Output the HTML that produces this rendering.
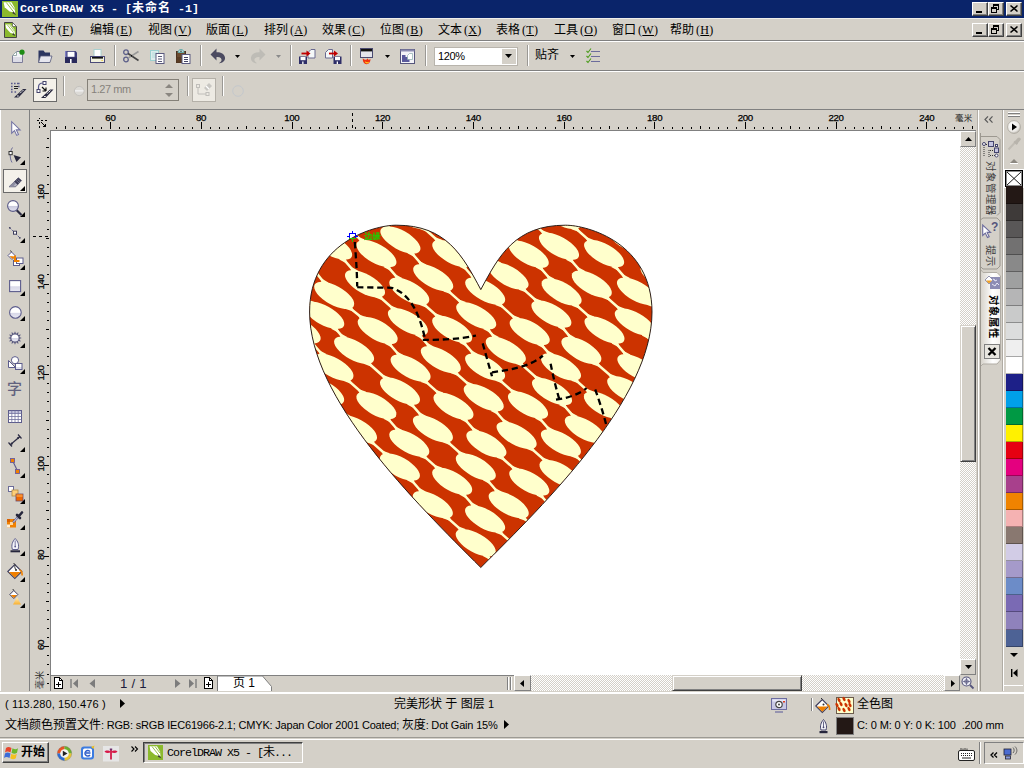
<!DOCTYPE html><html><head><meta charset="utf-8"><title>CorelDRAW X5</title><style>

html,body{margin:0;padding:0;}
body{width:1024px;height:768px;overflow:hidden;background:#D4D0C8;position:relative;font-family:"Liberation Sans","Noto Sans CJK SC",sans-serif;font-size:11px;color:#000;}
.a{position:absolute;}
.t{position:absolute;white-space:nowrap;line-height:1;}
svg{position:absolute;overflow:visible;}
.btn{position:absolute;background:#D4D0C8;box-sizing:border-box;border:1px solid;border-color:#fff #404040 #404040 #fff;box-shadow:inset -1px -1px 0 #808080, inset 1px 1px 0 #D4D0C8;}
.sep{position:absolute;width:2px;border-left:1px solid #9A9894;border-right:1px solid #fff;box-sizing:border-box;}
.hl{position:absolute;left:0;width:1024px;height:1px;}
.menu{font-family:"Liberation Serif","Noto Sans CJK SC",serif;font-size:12px;}
.menu i{font-style:normal;letter-spacing:0.3px;margin-left:2px;}
.menu u{text-decoration:underline;}

</style></head><body>
<div class="a" style="left:0;top:0;width:1024px;height:18px;background:#0A246A"></div><div class="hl" style="top:18px;background:#F0EFEB"></div><svg style="left:2px;top:1px" width="16" height="16" viewBox="0 0 16 16"><rect width="16" height="16" fill="#8BB92D"/><path d="M1.5 1.2L9.5 1.200L12.600 6.800L13.200 11.800L7.600 10.600L2.700 6.200Z" fill="#fff"/><path d="M4.300 1.500L11.300 10.500M7.300 1.500L12.600 8.500" stroke="#8BB92D" stroke-width="0.900"/><path d="M11.300 10.300L14.300 14.300L10.300 12.300Z" fill="#3A3A3A"/></svg><div class="t" style="left:20px;top:3px;color:#fff;font-weight:bold;font-family:'Liberation Mono','Noto Sans CJK SC',monospace;font-size:11.67px;">CorelDRAW X5 - [<span style="font-size:12px;letter-spacing:1px">未命名</span> -1]</div><div class="btn" style="left:972px;top:2px;width:16px;height:14px"></div><div class="a" style="left:976px;top:11px;width:6px;height:2px;background:#000"></div><div class="btn" style="left:988px;top:2px;width:16px;height:14px"></div><svg style="left:988px;top:2px" width="16" height="14" shape-rendering="crispEdges"><rect x="5.5" y="2.500" width="5" height="5" fill="none" stroke="#000"/><rect x="5" y="2" width="6" height="2" fill="#000"/><rect x="3.500" y="5.500" width="5" height="5" fill="#D4D0C8" stroke="#000"/><rect x="3" y="5" width="6" height="2" fill="#000"/></svg><div class="btn" style="left:1006px;top:2px;width:16px;height:14px"></div><svg style="left:1006px;top:2px" width="16" height="14"><path d="M4.5 3.5l7 6M11.5 3.5l-7 6" fill="none" stroke="#000" stroke-width="1.6"/></svg>
<div class="hl" style="top:40px;background:#808080"></div><div class="hl" style="top:41px;background:#fff"></div><svg style="left:4px;top:22px" width="13" height="16" viewBox="0 0 13 16"><path d="M0.5 0.5h8l4 4v11h-12z" fill="#8BB92D" stroke="#444"/><path d="M8.5 0.5v4h4z" fill="#fff" stroke="#444" stroke-width="0.6"/><path d="M1.500 2.500l5 0l3.800 5l0.700 4.500l-4.500-1l-4.500-5z" fill="#fff"/><path d="M3.500 3l6 7.500M5.800 3l4.500 6" stroke="#8BB92D" stroke-width="0.800"/><path d="M9.300 11l2.200 3l-3.300-1.300z" fill="#3A3A3A"/></svg><div class="t menu" style="left:32px;top:24px">文件<i>(<u>F</u>)</i></div><div class="t menu" style="left:90px;top:24px">编辑<i>(<u>E</u>)</i></div><div class="t menu" style="left:148px;top:24px">视图<i>(<u>V</u>)</i></div><div class="t menu" style="left:206px;top:24px">版面<i>(<u>L</u>)</i></div><div class="t menu" style="left:264px;top:24px">排列<i>(<u>A</u>)</i></div><div class="t menu" style="left:322px;top:24px">效果<i>(<u>C</u>)</i></div><div class="t menu" style="left:380px;top:24px">位图<i>(<u>B</u>)</i></div><div class="t menu" style="left:438px;top:24px">文本<i>(<u>X</u>)</i></div><div class="t menu" style="left:496px;top:24px">表格<i>(<u>T</u>)</i></div><div class="t menu" style="left:554px;top:24px">工具<i>(<u>O</u>)</i></div><div class="t menu" style="left:612px;top:24px">窗口<i>(<u>W</u>)</i></div><div class="t menu" style="left:670px;top:24px">帮助<i>(<u>H</u>)</i></div><div class="btn" style="left:972px;top:23px;width:16px;height:14px"></div><div class="a" style="left:976px;top:32px;width:6px;height:2px;background:#000"></div><div class="btn" style="left:988px;top:23px;width:16px;height:14px"></div><svg style="left:988px;top:23px" width="16" height="14" shape-rendering="crispEdges"><rect x="5.5" y="2.500" width="5" height="5" fill="none" stroke="#000"/><rect x="5" y="2" width="6" height="2" fill="#000"/><rect x="3.500" y="5.500" width="5" height="5" fill="#D4D0C8" stroke="#000"/><rect x="3" y="5" width="6" height="2" fill="#000"/></svg><div class="btn" style="left:1006px;top:23px;width:16px;height:14px"></div><svg style="left:1006px;top:23px" width="16" height="14"><path d="M4.5 3.5l7 6M11.5 3.5l-7 6" fill="none" stroke="#000" stroke-width="1.6"/></svg>
<div class="hl" style="top:70px;background:#808080"></div><div class="hl" style="top:71px;background:#fff"></div><svg style="left:12px;top:49px" width="12" height="15" viewBox="0 0 12 15" ><path d="M4.5 2.5h6v11h-10v-7z" fill="#F4F4F8" stroke="#7C7C98"/><path d="M0.5 6.5h4v-4z" fill="#fff" stroke="#9AA"/><rect x="1" y="8" width="9" height="5" fill="#DCDCE6"/><circle cx="10" cy="3.2" r="2.6" fill="#1E8C14"/></svg><svg style="left:38px;top:50px" width="15" height="13" viewBox="0 0 15 13" ><path d="M0.5 0.5h5l1.5 2h5v10h-11.5z" fill="#2B3560"/><path d="M2.5 6h11.5l-2 6.5h-11.5z" fill="#E6E6EE" stroke="#55597A" stroke-width="0.8"/></svg><svg style="left:65px;top:51px" width="12" height="12" viewBox="0 0 12 12" ><path d="M0 0h10.5l1.5 1.5v10.5h-12z" fill="#3A3A78"/><rect x="0" y="0" width="1.5" height="6" fill="#7F7FC0"/><rect x="2.5" y="0.8" width="7" height="5" fill="#fff"/><rect x="0" y="6.5" width="12" height="5.5" fill="#2A2A5C"/><rect x="5" y="8" width="1.6" height="4" fill="#fff"/></svg><svg style="left:90px;top:49px" width="15" height="14" viewBox="0 0 15 14" ><rect x="4" y="0.5" width="7" height="8" fill="#fff" stroke="#A8D0D0"/><rect x="0.5" y="7.5" width="14" height="6" fill="#F0F0DC" stroke="#4A4A78"/><rect x="2" y="8" width="11" height="1.6" fill="#111"/><rect x="11.5" y="11" width="1.2" height="1" fill="#E8C020"/></svg><div class="sep" style="left:114px;top:45px;height:21px"></div><svg style="left:123px;top:49px" width="16" height="14" viewBox="0 0 16 14" ><circle cx="3" cy="3.2" r="2.3" fill="none" stroke="#5C5F8A" stroke-width="1.3"/><circle cx="3" cy="10.5" r="2.3" fill="none" stroke="#5C5F8A" stroke-width="1.3"/><path d="M5 4.5L15.5 11.5" stroke="#444" stroke-width="1.6"/><path d="M5 9.2L15.5 2.5" stroke="#999" stroke-width="1.6"/><circle cx="8.6" cy="6.9" r="0.8" fill="#000"/></svg><svg style="left:150px;top:50px" width="15" height="14" viewBox="0 0 15 14" ><rect x="0.5" y="0.5" width="8" height="10" fill="#DCECEC" stroke="#9CD0D0"/><path d="M2 3h5M2 5h5M2 7h5" stroke="#A8D8D8" stroke-width="0.8"/><rect x="6" y="3.5" width="8" height="10" fill="#fff" stroke="#5A5A80" stroke-width="1"/><path d="M8 6.5h4M8 9h4M8 11.5h4" stroke="#444466" stroke-width="0.9"/></svg><svg style="left:176px;top:49px" width="15" height="15" viewBox="0 0 15 15" ><rect x="0.5" y="2.5" width="9" height="11" fill="#6B4A2E" stroke="#4A3220"/><rect x="0.5" y="8" width="9" height="5.5" fill="#5A3C24"/><path d="M2 3.5c0-4 6-4 6 0z" fill="#B8DCDC" stroke="#6AA"/><circle cx="5" cy="2.2" r="0.7" fill="#222"/><rect x="6" y="5.5" width="8" height="9" fill="#fff" stroke="#5A5A80"/><path d="M8 8.5h4M8 10.5h4M8 12.5h4" stroke="#444466" stroke-width="1"/></svg><div class="sep" style="left:200px;top:45px;height:21px"></div><svg style="left:209.5px;top:48px" width="16" height="16" viewBox="0 0 16 16" ><path d="M6.5 0.5L0.5 6.5L6.5 12.5V9C10 8.5 12 10.5 11.5 12.5C11 14 9.5 14.8 9 15.2C12 15.5 15.5 13 15 9.5C14.5 5.5 10.5 4 6.5 4.2z" fill="#4B4A60"/></svg><svg style="left:235px;top:55px" width="5" height="3" viewBox="0 0 5 3" ><path d="M0 0h5l-2.5 3z" fill="#000"/></svg><svg style="left:250px;top:48px" width="16" height="16" viewBox="0 0 16 16" ><path d="M9.5 0.5L15.5 6.5L9.5 12.5V9C6 8.5 4 10.5 4.5 12.5C5 14 6.5 14.8 7 15.2C4 15.5 0.5 13 1 9.5C1.5 5.5 5.5 4 9.5 4.2z" fill="#BEBCB6"/></svg><svg style="left:276px;top:55px" width="5" height="3" viewBox="0 0 5 3" ><path d="M0 0h5l-2.5 3z" fill="#8A8A8A"/></svg><div class="sep" style="left:290px;top:45px;height:21px"></div><svg style="left:299px;top:49px" width="17" height="15" viewBox="0 0 17 15" ><g transform="translate(8.5,0)"><path d="M3.5 0.5h4v8.5h-7v-5.5z" fill="#F4F8F8" stroke="#6A6A90"/><path d="M3.5 3.5h4" stroke="#9CC" stroke-width="0"/></g><g transform="translate(0,7.5)"><rect width="8" height="7.5" fill="#2E2E68"/><rect x="1.5" y="0.5" width="5" height="3.2" fill="#fff"/><rect x="3.2" y="5" width="1.3" height="2.5" fill="#fff"/></g><path d="M2.5 4.5h7" stroke="#C00000" stroke-width="1.8"/><path d="M7.5 1.5l4 3l-4 3z" fill="#C00000"/></svg><svg style="left:325px;top:49px" width="17" height="15" viewBox="0 0 17 15" ><g transform="translate(0,0)"><path d="M3.5 0.5h4v8.5h-7v-5.5z" fill="#F4F8F8" stroke="#6A6A90"/><path d="M3.5 3.5h4" stroke="#9CC" stroke-width="0"/></g><g transform="translate(8.5,7.5)"><rect width="8" height="7.5" fill="#2E2E68"/><rect x="1.5" y="0.5" width="5" height="3.2" fill="#fff"/><rect x="3.2" y="5" width="1.3" height="2.5" fill="#fff"/></g><path d="M4 4.5h7" stroke="#C00000" stroke-width="1.8"/><path d="M9 1.5l4 3l-4 3z" fill="#C00000"/></svg><div class="sep" style="left:350px;top:45px;height:21px"></div><svg style="left:360px;top:48px" width="13" height="16" viewBox="0 0 13 16" ><rect x="0.5" y="0.5" width="12" height="9" fill="#E4E4EC" stroke="#4A4A70"/><rect x="1" y="1" width="11" height="2.4" fill="#111"/><path d="M2.8 10.300C2.500 14 4.500 16 6.500 16.200C9 16 10.800 14 10.300 10.800C9.500 12.300 8.300 12.300 7.600 10.300C6.500 12.300 4.500 12.300 2.800 10.300z" fill="#F03010"/><path d="M4.800 13.300C5.300 16 8.500 16.300 9.300 13.600C8.300 14.500 6.300 14.500 4.800 13.300z" fill="#FFD020"/></svg><svg style="left:385px;top:55px" width="5" height="3" viewBox="0 0 5 3" ><path d="M0 0h5l-2.5 3z" fill="#000"/></svg><svg style="left:400px;top:49px" width="15" height="15" viewBox="0 0 15 15" ><rect x="0.5" y="0.5" width="14" height="14" fill="#F4F4F8" stroke="#55557C"/><rect x="0.5" y="0.5" width="14" height="2" fill="#8C8CB0"/><path d="M2 6h3.5v2h4v5h-7.5z" fill="#5A5A9C"/><path d="M9.5 4.5h3v6h-5v-4z" fill="#fff" stroke="#8AA" stroke-width="0.7"/></svg><div class="sep" style="left:425px;top:45px;height:21px"></div><div class="a" style="left:434px;top:47px;width:84px;height:19px;box-sizing:border-box;background:#fff;border:1px solid #B8B4AC"></div><div class="a" style="left:502px;top:49px;width:14px;height:15px;background:#D4D0C8"></div><svg style="left:505.3px;top:54px" width="7" height="4" viewBox="0 0 7 4" ><path d="M0 0h7l-3.5 4z" fill="#000"/></svg><div class="t" style="left:438px;top:51px;font-size:11px;letter-spacing:-0.4px">120%</div><div class="sep" style="left:527px;top:45px;height:21px"></div><div class="t" style="left:535px;top:49px;font-size:12px;font-family:'Liberation Sans','Noto Sans CJK SC',sans-serif">贴齐</div><svg style="left:570px;top:55px" width="5" height="3" viewBox="0 0 5 3" ><path d="M0 0h5l-2.5 3z" fill="#000"/></svg><svg style="left:586px;top:48px" width="14" height="16" viewBox="0 0 14 16" ><path d="M5 3.5h9M5 8.5h9M5 13.5h9" stroke="#6C6C9C" stroke-width="1"/><path d="M0.5 3l1.5 1.5l3-4M0.5 8l1.5 1.5l3-4M0.5 13l1.5 1.5l3-4" fill="none" stroke="#4C9C1C" stroke-width="1.1"/></svg>
<div class="hl" style="top:109px;background:#808080"></div><svg style="left:10px;top:82px" width="17" height="16" viewBox="0 0 17 16" ><path d="M1 1.5h9M1 4.5h2M1 7.5h2M1 10h2M4.5 10h2M8 1.5h2M8 4.5h2" stroke="#5A5A8C" stroke-width="1.6" stroke-dasharray="1.6 1.4"/><path d="M4 4.5h4M4 6.5h4" stroke="#222" stroke-width="1"/><path d="M4 15.5l9-8.5h3.5l-8 8.5z" fill="#2A2A40"/><path d="M7 14l1.8 0M10 11.3l1.5-1.5M12 9.5l1.5-1.5" stroke="#fff" stroke-width="0.9"/></svg><div class="a" style="left:33px;top:78px;width:24px;height:24px;box-sizing:border-box;background:#F4F1EA;border:1px solid #6A6A6A"></div><svg style="left:36px;top:81px" width="18" height="18" viewBox="0 0 18 18" ><path d="M2.5 9V6C2.5 3 5 2 7 2" fill="none" stroke="#5A5A8C" stroke-width="1.2"/><rect x="7" y="0.5" width="3" height="3" fill="#fff" stroke="#44446C"/><rect x="1" y="8.5" width="3" height="3" fill="#fff" stroke="#44446C"/><path d="M6 6l4 4M10 10v-3.5M10 10h-3.5" stroke="#111" stroke-width="1.2" fill="none"/><path d="M5 17l9-8.5h3.5l-8 8.5z" fill="#2A2A40"/><path d="M8 15.5l1.8 0M11 12.8l1.5-1.5M13 11l1.5-1.5" stroke="#fff" stroke-width="0.9"/></svg><div class="sep" style="left:62.5px;top:76px;height:20px"></div><svg style="left:73.5px;top:85.5px" width="10.5" height="10" viewBox="0 0 10.5 10" ><ellipse cx="5.2" cy="5" rx="4.8" ry="4.6" fill="#DCDAD6" stroke="#C4C2BE"/><rect x="1" y="4" width="8.5" height="1.6" fill="#EEE"/></svg><div class="a" style="left:87px;top:79px;width:92px;height:22px;box-sizing:border-box;border:1px solid #848078;background:#D4D0C8"></div><div class="t" style="left:91px;top:84px;font-size:11px;letter-spacing:-0.45px;color:#86827C;">1.27 mm</div><svg style="left:165px;top:84px" width="8" height="4" viewBox="0 0 8 4" ><path d="M0 4h8l-4-4z" fill="#8A8680"/></svg><svg style="left:165px;top:92.5px" width="8" height="4" viewBox="0 0 8 4" ><path d="M0 0h8l-4 4z" fill="#8A8680"/></svg><div class="sep" style="left:187px;top:76px;height:20px"></div><div class="a" style="left:192px;top:78px;width:24px;height:24px;box-sizing:border-box;background:#EDEAE3;border:1px solid #B4B0A8"></div><svg style="left:195px;top:81px" width="18" height="18" viewBox="0 0 18 18" ><path d="M9 7l5-5l3 3l-5 5z" fill="#C8C6C2"/><path d="M11 5l3 3" stroke="#fff" stroke-width="1.2"/><rect x="1.5" y="3.5" width="3" height="3" fill="none" stroke="#C0BEBA"/><path d="M3 7v6h8" fill="none" stroke="#C0BEBA"/><rect x="11" y="11.5" width="3" height="3" fill="none" stroke="#C0BEBA"/></svg><div class="sep" style="left:221.5px;top:76px;height:20px"></div><svg style="left:232px;top:85px" width="12" height="12" viewBox="0 0 12 12" ><circle cx="6" cy="6" r="5.3" fill="none" stroke="#C4C8CC" stroke-width="1"/></svg>
<div class="a" style="left:0;top:110px;width:1px;height:582px;background:#fff"></div><div class="a" style="left:29px;top:110px;width:1px;height:582px;background:#808080"></div><svg style="left:11px;top:121px" width="10" height="15" viewBox="0 0 10 15" ><path d="M0.7 0.7v11.5l2.8-2.6l2.2 4.8l1.8-0.8l-2.2-4.7h3.8z" fill="#fff" stroke="#7474A4" stroke-width="1.1"/></svg><svg style="left:8px;top:147px" width="15" height="16" viewBox="0 0 15 16" ><path d="M4.5 0.5C1.5 5 1.5 11 4 15.5" fill="none" stroke="#6C6C98" stroke-width="1"/><rect x="1" y="4.5" width="3.2" height="3.2" fill="#fff" stroke="#333"/><path d="M5.5 8l7.5 2.2l-4.5 4.8z" fill="#26263C"/></svg><svg style="left:20px;top:160px" width="5" height="5" viewBox="0 0 5 5" ><path d="M5 0v5h-5z" fill="#000"/></svg><div class="a" style="left:3px;top:169px;width:24px;height:24px;box-sizing:border-box;background:#F4F1EA;border:1px solid #6A6A6A"></div><svg style="left:0px;top:0px" width="32" height="200" viewBox="0 0 32 200" ><path d="M9 186.8L18.300 177.800L21.500 180.600L15.600 186.800Z" fill="#B4B4C4" stroke="#4C4C64" stroke-width="0.700"/><path d="M14.200 181.800L18.300 177.800L21.500 180.600L17.600 184.700Z" fill="#3A3A54"/><path d="M16.600 180.800l2.800 2.500M17.800 179.600l2.800 2.500" stroke="#E8E8F0" stroke-width="0.700" stroke-dasharray="0.800 0.700"/><path d="M9 186.800L14.200 181.800L15.800 183.200L13 186.800Z" fill="#8C8CA0"/></svg><svg style="left:20px;top:185.8px" width="5" height="5" viewBox="0 0 5 5" ><path d="M5 0v5h-5z" fill="#000"/></svg><svg style="left:7px;top:200px" width="16" height="16" viewBox="0 0 16 16" ><defs><linearGradient id="zg" x1="0" y1="0" x2="0" y2="1"><stop offset="0.45" stop-color="#fff"/><stop offset="0.5" stop-color="#C8C8DC"/><stop offset="1" stop-color="#E4E4F0"/></linearGradient></defs><path d="M9.5 10L14.5 15" stroke="#2C2C44" stroke-width="2.2"/><circle cx="6" cy="6" r="5.4" fill="url(#zg)" stroke="#5C5C88" stroke-width="1.1"/></svg><svg style="left:20px;top:212px" width="5" height="5" viewBox="0 0 5 5" ><path d="M5 0v5h-5z" fill="#000"/></svg><svg style="left:9px;top:227px" width="12" height="12" viewBox="0 0 12 12" ><path d="M0.5 0.5L11 11" stroke="#6C6C98" stroke-width="1" stroke-dasharray="2 1"/><rect x="4.5" y="4.2" width="3" height="3" fill="#fff" stroke="#3C3C5C"/><circle cx="0.8" cy="0.8" r="0.9" fill="#3C3C5C"/><circle cx="10.8" cy="10.8" r="0.9" fill="#3C3C5C"/></svg><svg style="left:20px;top:238px" width="5" height="5" viewBox="0 0 5 5" ><path d="M5 0v5h-5z" fill="#000"/></svg><svg style="left:7px;top:250px" width="17" height="17" viewBox="0 0 17 17" ><path d="M1 5.5l3.5-3.5l4 4l-3.5 3.5z" fill="#fff" stroke="#5C5C8C"/><path d="M2.5 6l3 3l2.5-2.5z" fill="#F08000"/><path d="M4.5 2l-1-1.5" stroke="#333" stroke-width="1"/><rect x="6.5" y="10.5" width="6" height="5" fill="#fff" stroke="#5C5C8C"/><rect x="9.5" y="8" width="6.5" height="5.5" fill="#fff" stroke="#5C5C8C"/><path d="M8 5.5v5.5h4.5" stroke="#F08000" stroke-width="2" fill="none"/></svg><svg style="left:20px;top:264.5px" width="5" height="5" viewBox="0 0 5 5" ><path d="M5 0v5h-5z" fill="#000"/></svg><svg style="left:9px;top:280px" width="12" height="12" viewBox="0 0 12 12" ><defs><linearGradient id="rg" x1="0" y1="0" x2="0" y2="1"><stop offset="0.5" stop-color="#fff"/><stop offset="0.55" stop-color="#D8D8E8"/><stop offset="1" stop-color="#E8E8F2"/></linearGradient></defs><rect x="0.6" y="0.6" width="11" height="11" fill="url(#rg)" stroke="#5C5C8C" stroke-width="1.1"/></svg><svg style="left:20px;top:290.5px" width="5" height="5" viewBox="0 0 5 5" ><path d="M5 0v5h-5z" fill="#000"/></svg><svg style="left:8.5px;top:305.5px" width="13" height="13" viewBox="0 0 13 13" ><circle cx="6.4" cy="6.4" r="5.8" fill="url(#rg)" stroke="#5C5C8C" stroke-width="1.1"/></svg><svg style="left:20px;top:316px" width="5" height="5" viewBox="0 0 5 5" ><path d="M5 0v5h-5z" fill="#000"/></svg><svg style="left:8px;top:330.5px" width="14" height="14" viewBox="0 0 14 14" ><polygon points="13.8,7.0 11.3,8.1 12.9,10.4 10.1,10.1 10.4,12.9 8.1,11.3 7.0,13.8 5.9,11.3 3.6,12.9 3.9,10.1 1.1,10.4 2.7,8.1 0.2,7.0 2.7,5.9 1.1,3.6 3.9,3.9 3.6,1.1 5.9,2.7 7.0,0.2 8.1,2.7 10.4,1.1 10.1,3.9 12.9,3.6 11.3,5.9" fill="#5C5C80"/><circle cx="7" cy="7" r="3.6" fill="url(#rg)"/></svg><svg style="left:20px;top:343px" width="5" height="5" viewBox="0 0 5 5" ><path d="M5 0v5h-5z" fill="#000"/></svg><svg style="left:7.5px;top:356px" width="15" height="14" viewBox="0 0 15 14" ><path d="M0.5 4.5v7h7z" fill="#fff" stroke="#5C5C8C"/><circle cx="7" cy="4.2" r="3.6" fill="#fff" stroke="#5C5C8C"/><rect x="7.5" y="7.5" width="6.5" height="6" fill="url(#rg)" stroke="#5C5C8C"/></svg><svg style="left:20px;top:369px" width="5" height="5" viewBox="0 0 5 5" ><path d="M5 0v5h-5z" fill="#000"/></svg><div class="t" style="left:7px;top:381px;font-size:15px;font-weight:500;color:#62627E;font-family:'Liberation Sans','Noto Sans CJK SC',sans-serif">字</div><svg style="left:8px;top:410px" width="14" height="13" viewBox="0 0 14 13" ><rect x="0.5" y="0.5" width="13" height="12" fill="#fff" stroke="#5C5C8C"/><rect x="1" y="1" width="12" height="2.5" fill="#C4C4DC"/><path d="M0.5 3.5h13M0.5 6.5h13M0.5 9.5h13M3.8 0.5v12M7 0.5v12M10.2 0.5v12" stroke="#7474A0" stroke-width="0.8"/></svg><svg style="left:8px;top:434px" width="14" height="13" viewBox="0 0 14 13" ><path d="M2 11L12 2.5" stroke="#2C2C44" stroke-width="1.2"/><path d="M0.5 8.5l3.5 4M10 0.5l3.5 4" stroke="#2C2C44" stroke-width="1.2"/><path d="M2 11l3.2-1l-1.6-1.8zM12 2.5l-3.2 1l1.6 1.8z" fill="#2C2C44"/></svg><svg style="left:20px;top:447px" width="5" height="5" viewBox="0 0 5 5" ><path d="M5 0v5h-5z" fill="#000"/></svg><svg style="left:10px;top:458px" width="11" height="17" viewBox="0 0 11 17" ><path d="M2.5 2.5L8 14" stroke="#5C5C8C" stroke-width="1.1"/><rect x="0.5" y="0.5" width="4" height="4" fill="#F08000" stroke="#6C5C9C" stroke-width="0.9"/><rect x="5.5" y="11.5" width="4" height="4" fill="#F08000" stroke="#6C5C9C" stroke-width="0.9"/></svg><svg style="left:20px;top:473px" width="5" height="5" viewBox="0 0 5 5" ><path d="M5 0v5h-5z" fill="#000"/></svg><svg style="left:8px;top:486px" width="16" height="16" viewBox="0 0 16 16" ><rect x="0.5" y="0.5" width="5" height="5" fill="#fff" stroke="#6C6C98"/><rect x="4" y="4" width="6" height="6" fill="#FFD078" stroke="#B08840" stroke-width="0.8"/><rect x="8" y="8" width="7" height="7" fill="#F06800" stroke="#6C4C6C" stroke-width="0.8"/><rect x="8.5" y="8.5" width="6" height="2.5" fill="#F89030"/></svg><svg style="left:20px;top:499px" width="5" height="5" viewBox="0 0 5 5" ><path d="M5 0v5h-5z" fill="#000"/></svg><svg style="left:6.5px;top:511px" width="17" height="17" viewBox="0 0 17 17" ><rect x="0" y="8" width="9" height="8.5" fill="#F08000"/><rect x="0" y="8" width="3" height="3" fill="#D86000"/><rect x="3" y="11" width="3" height="3" fill="#FFD8A0"/><rect x="6" y="8" width="3" height="3" fill="#D86000"/><rect x="0" y="13.5" width="3" height="3" fill="#FFF0D8"/><path d="M6 11.5l6-6.5" stroke="#6C6C98" stroke-width="2.2"/><path d="M6.5 11l5-5.5" stroke="#E8E8F4" stroke-width="0.8"/><path d="M10 4l3 3M11.5 5.5l3.5-4" stroke="#26263C" stroke-width="2.6" stroke-linecap="round"/></svg><svg style="left:20px;top:525px" width="5" height="5" viewBox="0 0 5 5" ><path d="M5 0v5h-5z" fill="#000"/></svg><svg style="left:10px;top:538px" width="11" height="15" viewBox="0 0 11 15" ><path d="M5.2 0.5C8 3.5 9.5 7 8 11.5h-5.6C1 7 2.5 3.5 5.2 0.5z" fill="#F4F4FA" stroke="#5C5C8C" stroke-width="1"/><path d="M5.2 2.5v6" stroke="#5C5C8C" stroke-width="0.8"/><circle cx="5.2" cy="8.6" r="0.9" fill="#5C5C8C"/><rect x="0.5" y="12.3" width="9.5" height="2" fill="#26263C"/></svg><svg style="left:20px;top:551px" width="5" height="5" viewBox="0 0 5 5" ><path d="M5 0v5h-5z" fill="#000"/></svg><svg style="left:6.5px;top:563px" width="17" height="17" viewBox="0 0 17 17" ><path d="M0.8 8.5l7-7l7 7l-7 7z" fill="#fff" stroke="#3C3C5C" stroke-width="1.1"/><path d="M2 9h11.6l-5.8 5.8z" fill="#F08000"/><path d="M8 1.5l-1.5-1.5M8.2 1.8c-1 2 0 4.5 1 5" stroke="#333" stroke-width="1" fill="none"/><circle cx="9" cy="7" r="1" fill="#333"/><path d="M12.5 7c2 0.5 2.8 2 2.6 5.5" fill="none" stroke="#F08000" stroke-width="1.6"/></svg><svg style="left:20px;top:577px" width="5" height="5" viewBox="0 0 5 5" ><path d="M5 0v5h-5z" fill="#000"/></svg><svg style="left:9px;top:589px" width="14" height="16" viewBox="0 0 14 16" ><path d="M0.8 5.5l4-4l4 4l-4 4z" fill="#fff" stroke="#3C3C5C" stroke-width="1"/><path d="M1.8 6h6l-3 3z" fill="#F08000"/><path d="M4.8 1.5l-1-1.5" stroke="#333" stroke-width="1"/><defs><linearGradient id="ig" x1="0" y1="0" x2="0" y2="1"><stop offset="0" stop-color="#FFF0C0"/><stop offset="1" stop-color="#F8B030"/></linearGradient></defs><path d="M8 8l4 7.5h-8z" fill="url(#ig)"/></svg><svg style="left:20px;top:603px" width="5" height="5" viewBox="0 0 5 5" ><path d="M5 0v5h-5z" fill="#000"/></svg>
<div class="a" style="left:50px;top:130px;width:926px;height:1px;background:#808080"></div><div class="a" style="left:50px;top:130px;width:1px;height:562px;background:#808080"></div><svg style="left:0;top:0" width="60" height="135" shape-rendering="crispEdges"><path d="M37 120.5h2M41 120.5h2M45 120.5h2M39.5 118v1M39.5 122v2M39.500 126v2" stroke="#000" stroke-width="1"/><path d="M41 122l1 0l0 1l1 0l0 1l1 0l0 1l1 0l0 -1l1 0l0 3l-3 0l0 -1l1 0l0 -1l-1 0l0 -1l-1 0l0 -1l-1 0z" fill="#000"/></svg><svg style="left:0;top:0" width="1024" height="768" shape-rendering="crispEdges"><path d="M56.5 127v2M65.5 126v3M74.5 127v2M83.5 127v2M92.5 127v2M101.5 127v2M110.5 122v7M119.5 127v2M128.5 127v2M137.5 127v2M146.5 127v2M155.5 126v3M165.5 127v2M174.5 127v2M183.5 127v2M192.5 127v2M201.5 122v7M210.5 127v2M219.5 127v2M228.5 127v2M237.5 127v2M246.5 126v3M255.5 127v2M264.5 127v2M273.5 127v2M282.5 127v2M292.5 122v7M301.5 127v2M310.5 127v2M319.5 127v2M328.5 127v2M337.5 126v3M346.5 127v2M355.5 127v2M364.5 127v2M373.5 127v2M382.5 122v7M391.5 127v2M400.5 127v2M409.5 127v2M419.5 127v2M428.5 126v3M437.5 127v2M446.5 127v2M455.5 127v2M464.5 127v2M473.5 122v7M482.5 127v2M491.5 127v2M500.5 127v2M509.5 127v2M518.5 126v3M527.5 127v2M536.5 127v2M545.5 127v2M555.5 127v2M564.5 122v7M573.5 127v2M582.5 127v2M591.5 127v2M600.5 127v2M609.5 126v3M618.5 127v2M627.5 127v2M636.5 127v2M645.5 127v2M654.5 122v7M663.5 127v2M672.5 127v2M682.5 127v2M691.5 127v2M700.5 126v3M709.5 127v2M718.5 127v2M727.5 127v2M736.5 127v2M745.5 122v7M754.5 127v2M763.5 127v2M772.5 127v2M781.5 127v2M790.5 126v3M799.5 127v2M809.5 127v2M818.5 127v2M827.5 127v2M836.5 122v7M845.5 127v2M854.5 127v2M863.5 127v2M872.5 127v2M881.5 126v3M890.5 127v2M899.5 127v2M908.5 127v2M917.5 127v2M926.5 122v7M936.5 127v2M945.5 127v2M954.5 127v2M963.5 127v2M972.5 126v3" stroke="#000" stroke-width="1" fill="none"/></svg><div class="t" style="left:95.4px;top:112.8px;width:30px;text-align:center;font-size:9.7px;letter-spacing:-0.35px;-webkit-text-stroke:0.25px #000">60</div><div class="t" style="left:186.108px;top:112.8px;width:30px;text-align:center;font-size:9.7px;letter-spacing:-0.35px;-webkit-text-stroke:0.25px #000">80</div><div class="t" style="left:276.816px;top:112.8px;width:30px;text-align:center;font-size:9.7px;letter-spacing:-0.35px;-webkit-text-stroke:0.25px #000">100</div><div class="t" style="left:367.524px;top:112.8px;width:30px;text-align:center;font-size:9.7px;letter-spacing:-0.35px;-webkit-text-stroke:0.25px #000">120</div><div class="t" style="left:458.232px;top:112.8px;width:30px;text-align:center;font-size:9.7px;letter-spacing:-0.35px;-webkit-text-stroke:0.25px #000">140</div><div class="t" style="left:548.94px;top:112.8px;width:30px;text-align:center;font-size:9.7px;letter-spacing:-0.35px;-webkit-text-stroke:0.25px #000">160</div><div class="t" style="left:639.648px;top:112.8px;width:30px;text-align:center;font-size:9.7px;letter-spacing:-0.35px;-webkit-text-stroke:0.25px #000">180</div><div class="t" style="left:730.356px;top:112.8px;width:30px;text-align:center;font-size:9.7px;letter-spacing:-0.35px;-webkit-text-stroke:0.25px #000">200</div><div class="t" style="left:821.064px;top:112.8px;width:30px;text-align:center;font-size:9.7px;letter-spacing:-0.35px;-webkit-text-stroke:0.25px #000">220</div><div class="t" style="left:911.772px;top:112.8px;width:30px;text-align:center;font-size:9.7px;letter-spacing:-0.35px;-webkit-text-stroke:0.25px #000">240</div><div class="t" style="left:955px;top:113.5px;font-size:8.5px;letter-spacing:0.3px;color:#222;font-family:'Liberation Sans','Noto Sans CJK SC',sans-serif">毫米</div><svg style="left:0;top:0" width="1024" height="768" shape-rendering="crispEdges"><path d="M47 138.5h2M46 147.5h3M47 157.5h2M47 166.5h2M47 175.5h2M47 184.5h2M44 193.5h5M47 202.5h2M47 211.5h2M47 220.5h2M47 229.5h2M46 238.5h3M47 247.5h2M47 256.5h2M47 265.5h2M47 274.5h2M44 284.5h5M47 293.5h2M47 302.5h2M47 311.5h2M47 320.5h2M46 329.5h3M47 338.5h2M47 347.5h2M47 356.5h2M47 365.5h2M44 374.5h5M47 383.5h2M47 392.5h2M47 401.5h2M47 411.5h2M46 420.5h3M47 429.5h2M47 438.5h2M47 447.5h2M47 456.5h2M44 465.5h5M47 474.5h2M47 483.5h2M47 492.5h2M47 501.5h2M46 510.5h3M47 519.5h2M47 528.5h2M47 538.5h2M47 547.5h2M44 556.5h5M47 565.5h2M47 574.5h2M47 583.5h2M47 592.5h2M46 601.5h3M47 610.5h2M47 619.5h2M47 628.5h2M47 637.5h2M44 646.5h5M47 655.5h2M47 664.5h2M47 674.5h2M47 683.5h2" stroke="#000" stroke-width="1" fill="none"/></svg><div class="t" style="left:26.1px;top:640.25px;width:30px;height:10px;text-align:center;font-size:9.7px;letter-spacing:-0.35px;-webkit-text-stroke:0.25px #000;transform:rotate(-90deg);transform-origin:15px 5px">60</div><div class="t" style="left:26.1px;top:549.542px;width:30px;height:10px;text-align:center;font-size:9.7px;letter-spacing:-0.35px;-webkit-text-stroke:0.25px #000;transform:rotate(-90deg);transform-origin:15px 5px">80</div><div class="t" style="left:26.1px;top:458.834px;width:30px;height:10px;text-align:center;font-size:9.7px;letter-spacing:-0.35px;-webkit-text-stroke:0.25px #000;transform:rotate(-90deg);transform-origin:15px 5px">100</div><div class="t" style="left:26.1px;top:368.126px;width:30px;height:10px;text-align:center;font-size:9.7px;letter-spacing:-0.35px;-webkit-text-stroke:0.25px #000;transform:rotate(-90deg);transform-origin:15px 5px">120</div><div class="t" style="left:26.1px;top:277.418px;width:30px;height:10px;text-align:center;font-size:9.7px;letter-spacing:-0.35px;-webkit-text-stroke:0.25px #000;transform:rotate(-90deg);transform-origin:15px 5px">140</div><div class="t" style="left:26.1px;top:186.71px;width:30px;height:10px;text-align:center;font-size:9.7px;letter-spacing:-0.35px;-webkit-text-stroke:0.25px #000;transform:rotate(-90deg);transform-origin:15px 5px">160</div><div class="t" style="left:25.5px;top:674.5px;width:30px;height:10px;text-align:center;font-size:9px;font-family:'Liberation Sans','Noto Sans CJK SC',sans-serif;transform:rotate(-90deg);transform-origin:15px 5px;color:#333">毫米</div><svg style="left:0;top:0" width="1024" height="768" shape-rendering="crispEdges"><path d="M352.5 113v3M352.5 119v3M352.5 125v3" stroke="#000" stroke-width="1"/><path d="M33 236.5h3M39 236.5h3M45 236.5h3" stroke="#000" stroke-width="1"/></svg>
<div class="a" style="left:51px;top:131px;width:909px;height:544px;background:#fff"></div><svg style="left:0;top:0" width="1024" height="768" viewBox="0 0 1024 768"><defs><clipPath id="hc"><path d="M480.8 289.6 C499.1 255.3 515.3 225.2 565.4 225.2 C588.1 225.2 652 243.2 652 312 C652 398.5 546.3 502.2 480.8 567.5 C415.3 502.2 309.6 398.5 309.6 312 C309.6 243.2 373.5 225.2 396.2 225.2 C446.3 225.2 462.5 255.3 480.8 289.6Z"/></clipPath></defs><g clip-path="url(#hc)"><rect x="300" y="215" width="362" height="362" fill="#CC3300"/><path d="M301.7 406.6 L334.5 444.3 L377.5 482.4 L410.3 520.1 L453.3 558.2 L486.1 595.9M281.2 353.1 L324.1 391.2 L357.0 428.9 L399.9 467.0 L432.8 504.7 L475.7 542.8 L508.6 580.5 L551.5 618.6M300.6 329.7 L333.5 367.4 L376.4 405.5 L409.3 443.2 L452.2 481.3 L485.1 519.0 L528.0 557.1 L560.9 594.8M281.3 277.3 L324.2 315.4 L354.1 350.3 L400.0 391.2 L432.9 428.9 L475.8 467.0 L508.7 504.7 L551.6 542.8 L584.5 580.5 L627.4 618.6M301.9 254.7 L334.2 295.4 L377.7 330.5 L410.6 368.2 L453.5 406.3 L486.4 444.0 L529.3 482.1 L562.2 519.8 L605.1 557.9 L638.0 595.6M289.2 208.0 L332.1 246.1 L365.0 283.8 L407.9 321.9 L440.8 359.6 L483.7 397.7 L516.6 435.4 L559.5 473.5 L592.4 511.2 L635.3 549.4 L668.2 587.0M333.5 215.5 L376.4 253.6 L409.3 291.3 L452.2 329.4 L485.1 367.1 L528.0 405.2 L560.9 442.9 L603.8 481.0 L636.7 518.7 L679.6 556.8M357.4 201.9 L400.4 240.0 L433.2 277.7 L476.2 315.8 L505.8 350.3 L552.0 391.6 L584.8 429.3 L627.8 467.4 L660.6 505.1M409.4 215.4 L452.3 253.5 L485.2 291.2 L529.7 331.5 L561.0 367.0 L603.9 405.1 L636.8 442.8 L679.7 480.9M432.7 200.2 L475.6 238.3 L508.5 276.0 L551.4 314.1 L581.4 350.5 L627.2 389.9 L660.1 427.6M485.8 216.2 L528.7 254.3 L561.6 292.0 L604.5 330.1 L637.4 367.8 L680.3 406.0M516.0 208.3 L559.0 246.4 L591.8 284.1 L634.8 322.2 L667.7 359.9M561.2 215.5 L604.1 253.6 L637.0 291.3 L679.9 329.4M584.7 201.2 L627.6 239.3 L660.5 277.0" fill="none" stroke="#FFFFCC" stroke-width="2.5"/><g fill="#FFFFCC"><ellipse cx="301.7" cy="406.6" rx="22.3" ry="9.6" transform="rotate(29 301.7 406.6)"/><ellipse cx="334.5" cy="444.3" rx="22.3" ry="9.6" transform="rotate(29 334.5 444.3)"/><ellipse cx="377.5" cy="482.4" rx="22.3" ry="9.6" transform="rotate(29 377.5 482.4)"/><ellipse cx="410.3" cy="520.1" rx="22.3" ry="9.6" transform="rotate(29 410.3 520.1)"/><ellipse cx="453.3" cy="558.2" rx="22.3" ry="9.6" transform="rotate(29 453.3 558.2)"/><ellipse cx="486.1" cy="595.9" rx="22.3" ry="9.6" transform="rotate(29 486.1 595.9)"/><ellipse cx="281.2" cy="353.1" rx="22.3" ry="9.6" transform="rotate(29 281.2 353.1)"/><ellipse cx="324.1" cy="391.2" rx="22.3" ry="9.6" transform="rotate(29 324.1 391.2)"/><ellipse cx="357.0" cy="428.9" rx="22.3" ry="9.6" transform="rotate(29 357.0 428.9)"/><ellipse cx="399.9" cy="467.0" rx="22.3" ry="9.6" transform="rotate(29 399.9 467.0)"/><ellipse cx="432.8" cy="504.7" rx="22.3" ry="9.6" transform="rotate(29 432.8 504.7)"/><ellipse cx="475.7" cy="542.8" rx="22.3" ry="9.6" transform="rotate(29 475.7 542.8)"/><ellipse cx="508.6" cy="580.5" rx="22.3" ry="9.6" transform="rotate(29 508.6 580.5)"/><ellipse cx="551.5" cy="618.6" rx="22.3" ry="9.6" transform="rotate(29 551.5 618.6)"/><ellipse cx="300.6" cy="329.7" rx="22.3" ry="9.6" transform="rotate(29 300.6 329.7)"/><ellipse cx="333.5" cy="367.4" rx="22.3" ry="9.6" transform="rotate(29 333.5 367.4)"/><ellipse cx="376.4" cy="405.5" rx="22.3" ry="9.6" transform="rotate(29 376.4 405.5)"/><ellipse cx="409.3" cy="443.2" rx="22.3" ry="9.6" transform="rotate(29 409.3 443.2)"/><ellipse cx="452.2" cy="481.3" rx="22.3" ry="9.6" transform="rotate(29 452.2 481.3)"/><ellipse cx="485.1" cy="519.0" rx="22.3" ry="9.6" transform="rotate(29 485.1 519.0)"/><ellipse cx="528.0" cy="557.1" rx="22.3" ry="9.6" transform="rotate(29 528.0 557.1)"/><ellipse cx="560.9" cy="594.8" rx="22.3" ry="9.6" transform="rotate(29 560.9 594.8)"/><ellipse cx="281.3" cy="277.3" rx="22.3" ry="9.6" transform="rotate(29 281.3 277.3)"/><ellipse cx="324.2" cy="315.4" rx="22.3" ry="9.6" transform="rotate(29 324.2 315.4)"/><ellipse cx="354.1" cy="350.3" rx="22.3" ry="9.6" transform="rotate(29 354.1 350.3)"/><ellipse cx="400.0" cy="391.2" rx="22.3" ry="9.6" transform="rotate(29 400.0 391.2)"/><ellipse cx="432.9" cy="428.9" rx="22.3" ry="9.6" transform="rotate(29 432.9 428.9)"/><ellipse cx="475.8" cy="467.0" rx="22.3" ry="9.6" transform="rotate(29 475.8 467.0)"/><ellipse cx="508.7" cy="504.7" rx="22.3" ry="9.6" transform="rotate(29 508.7 504.7)"/><ellipse cx="551.6" cy="542.8" rx="22.3" ry="9.6" transform="rotate(29 551.6 542.8)"/><ellipse cx="584.5" cy="580.5" rx="22.3" ry="9.6" transform="rotate(29 584.5 580.5)"/><ellipse cx="627.4" cy="618.6" rx="22.3" ry="9.6" transform="rotate(29 627.4 618.6)"/><ellipse cx="301.9" cy="254.7" rx="22.3" ry="9.6" transform="rotate(29 301.9 254.7)"/><ellipse cx="334.2" cy="295.4" rx="22.3" ry="9.6" transform="rotate(29 334.2 295.4)"/><ellipse cx="377.7" cy="330.5" rx="22.3" ry="9.6" transform="rotate(29 377.7 330.5)"/><ellipse cx="410.6" cy="368.2" rx="22.3" ry="9.6" transform="rotate(29 410.6 368.2)"/><ellipse cx="453.5" cy="406.3" rx="22.3" ry="9.6" transform="rotate(29 453.5 406.3)"/><ellipse cx="486.4" cy="444.0" rx="22.3" ry="9.6" transform="rotate(29 486.4 444.0)"/><ellipse cx="529.3" cy="482.1" rx="22.3" ry="9.6" transform="rotate(29 529.3 482.1)"/><ellipse cx="562.2" cy="519.8" rx="22.3" ry="9.6" transform="rotate(29 562.2 519.8)"/><ellipse cx="605.1" cy="557.9" rx="22.3" ry="9.6" transform="rotate(29 605.1 557.9)"/><ellipse cx="638.0" cy="595.6" rx="22.3" ry="9.6" transform="rotate(29 638.0 595.6)"/><ellipse cx="289.2" cy="208.0" rx="22.3" ry="9.6" transform="rotate(29 289.2 208.0)"/><ellipse cx="332.1" cy="246.1" rx="22.3" ry="9.6" transform="rotate(29 332.1 246.1)"/><ellipse cx="365.0" cy="283.8" rx="22.3" ry="9.6" transform="rotate(29 365.0 283.8)"/><ellipse cx="407.9" cy="321.9" rx="22.3" ry="9.6" transform="rotate(29 407.9 321.9)"/><ellipse cx="440.8" cy="359.6" rx="22.3" ry="9.6" transform="rotate(29 440.8 359.6)"/><ellipse cx="483.7" cy="397.7" rx="22.3" ry="9.6" transform="rotate(29 483.7 397.7)"/><ellipse cx="516.6" cy="435.4" rx="22.3" ry="9.6" transform="rotate(29 516.6 435.4)"/><ellipse cx="559.5" cy="473.5" rx="22.3" ry="9.6" transform="rotate(29 559.5 473.5)"/><ellipse cx="592.4" cy="511.2" rx="22.3" ry="9.6" transform="rotate(29 592.4 511.2)"/><ellipse cx="635.3" cy="549.4" rx="22.3" ry="9.6" transform="rotate(29 635.3 549.4)"/><ellipse cx="668.2" cy="587.0" rx="22.3" ry="9.6" transform="rotate(29 668.2 587.0)"/><ellipse cx="333.5" cy="215.5" rx="22.3" ry="9.6" transform="rotate(29 333.5 215.5)"/><ellipse cx="376.4" cy="253.6" rx="22.3" ry="9.6" transform="rotate(29 376.4 253.6)"/><ellipse cx="409.3" cy="291.3" rx="22.3" ry="9.6" transform="rotate(29 409.3 291.3)"/><ellipse cx="452.2" cy="329.4" rx="22.3" ry="9.6" transform="rotate(29 452.2 329.4)"/><ellipse cx="485.1" cy="367.1" rx="22.3" ry="9.6" transform="rotate(29 485.1 367.1)"/><ellipse cx="528.0" cy="405.2" rx="22.3" ry="9.6" transform="rotate(29 528.0 405.2)"/><ellipse cx="560.9" cy="442.9" rx="22.3" ry="9.6" transform="rotate(29 560.9 442.9)"/><ellipse cx="603.8" cy="481.0" rx="22.3" ry="9.6" transform="rotate(29 603.8 481.0)"/><ellipse cx="636.7" cy="518.7" rx="22.3" ry="9.6" transform="rotate(29 636.7 518.7)"/><ellipse cx="679.6" cy="556.8" rx="22.3" ry="9.6" transform="rotate(29 679.6 556.8)"/><ellipse cx="357.4" cy="201.9" rx="22.3" ry="9.6" transform="rotate(29 357.4 201.9)"/><ellipse cx="400.4" cy="240.0" rx="22.3" ry="9.6" transform="rotate(29 400.4 240.0)"/><ellipse cx="433.2" cy="277.7" rx="22.3" ry="9.6" transform="rotate(29 433.2 277.7)"/><ellipse cx="476.2" cy="315.8" rx="22.3" ry="9.6" transform="rotate(29 476.2 315.8)"/><ellipse cx="505.8" cy="350.3" rx="22.3" ry="9.6" transform="rotate(29 505.8 350.3)"/><ellipse cx="552.0" cy="391.6" rx="22.3" ry="9.6" transform="rotate(29 552.0 391.6)"/><ellipse cx="584.8" cy="429.3" rx="22.3" ry="9.6" transform="rotate(29 584.8 429.3)"/><ellipse cx="627.8" cy="467.4" rx="22.3" ry="9.6" transform="rotate(29 627.8 467.4)"/><ellipse cx="660.6" cy="505.1" rx="22.3" ry="9.6" transform="rotate(29 660.6 505.1)"/><ellipse cx="409.4" cy="215.4" rx="22.3" ry="9.6" transform="rotate(29 409.4 215.4)"/><ellipse cx="452.3" cy="253.5" rx="22.3" ry="9.6" transform="rotate(29 452.3 253.5)"/><ellipse cx="485.2" cy="291.2" rx="22.3" ry="9.6" transform="rotate(29 485.2 291.2)"/><ellipse cx="529.7" cy="331.5" rx="22.3" ry="9.6" transform="rotate(29 529.7 331.5)"/><ellipse cx="561.0" cy="367.0" rx="22.3" ry="9.6" transform="rotate(29 561.0 367.0)"/><ellipse cx="603.9" cy="405.1" rx="22.3" ry="9.6" transform="rotate(29 603.9 405.1)"/><ellipse cx="636.8" cy="442.8" rx="22.3" ry="9.6" transform="rotate(29 636.8 442.8)"/><ellipse cx="679.7" cy="480.9" rx="22.3" ry="9.6" transform="rotate(29 679.7 480.9)"/><ellipse cx="432.7" cy="200.2" rx="22.3" ry="9.6" transform="rotate(29 432.7 200.2)"/><ellipse cx="475.6" cy="238.3" rx="22.3" ry="9.6" transform="rotate(29 475.6 238.3)"/><ellipse cx="508.5" cy="276.0" rx="22.3" ry="9.6" transform="rotate(29 508.5 276.0)"/><ellipse cx="551.4" cy="314.1" rx="22.3" ry="9.6" transform="rotate(29 551.4 314.1)"/><ellipse cx="581.4" cy="350.5" rx="22.3" ry="9.6" transform="rotate(29 581.4 350.5)"/><ellipse cx="627.2" cy="389.9" rx="22.3" ry="9.6" transform="rotate(29 627.2 389.9)"/><ellipse cx="660.1" cy="427.6" rx="22.3" ry="9.6" transform="rotate(29 660.1 427.6)"/><ellipse cx="485.8" cy="216.2" rx="22.3" ry="9.6" transform="rotate(29 485.8 216.2)"/><ellipse cx="528.7" cy="254.3" rx="22.3" ry="9.6" transform="rotate(29 528.7 254.3)"/><ellipse cx="561.6" cy="292.0" rx="22.3" ry="9.6" transform="rotate(29 561.6 292.0)"/><ellipse cx="604.5" cy="330.1" rx="22.3" ry="9.6" transform="rotate(29 604.5 330.1)"/><ellipse cx="637.4" cy="367.8" rx="22.3" ry="9.6" transform="rotate(29 637.4 367.8)"/><ellipse cx="680.3" cy="406.0" rx="22.3" ry="9.6" transform="rotate(29 680.3 406.0)"/><ellipse cx="516.0" cy="208.3" rx="22.3" ry="9.6" transform="rotate(29 516.0 208.3)"/><ellipse cx="559.0" cy="246.4" rx="22.3" ry="9.6" transform="rotate(29 559.0 246.4)"/><ellipse cx="591.8" cy="284.1" rx="22.3" ry="9.6" transform="rotate(29 591.8 284.1)"/><ellipse cx="634.8" cy="322.2" rx="22.3" ry="9.6" transform="rotate(29 634.8 322.2)"/><ellipse cx="667.7" cy="359.9" rx="22.3" ry="9.6" transform="rotate(29 667.7 359.9)"/><ellipse cx="561.2" cy="215.5" rx="22.3" ry="9.6" transform="rotate(29 561.2 215.5)"/><ellipse cx="604.1" cy="253.6" rx="22.3" ry="9.6" transform="rotate(29 604.1 253.6)"/><ellipse cx="637.0" cy="291.3" rx="22.3" ry="9.6" transform="rotate(29 637.0 291.3)"/><ellipse cx="679.9" cy="329.4" rx="22.3" ry="9.6" transform="rotate(29 679.9 329.4)"/><ellipse cx="584.7" cy="201.2" rx="22.3" ry="9.6" transform="rotate(29 584.7 201.2)"/><ellipse cx="627.6" cy="239.3" rx="22.3" ry="9.6" transform="rotate(29 627.6 239.3)"/><ellipse cx="660.5" cy="277.0" rx="22.3" ry="9.6" transform="rotate(29 660.5 277.0)"/></g><path d="M308.7 419.9L313.8 415.4L317.2 424.4ZM322.3 435.5L327.5 431.0L319.0 426.5ZM344.8 458.0L349.3 452.9L353.8 461.4ZM362.7 473.8L367.2 468.7L358.2 465.3ZM384.5 495.7L389.6 491.2L393.0 500.2ZM398.1 511.3L403.3 506.8L394.8 502.3ZM420.6 533.8L425.1 528.7L429.6 537.2ZM438.5 549.6L443.0 544.5L434.0 541.1ZM460.3 571.5L465.4 567.0L468.8 576.0ZM473.9 587.1L479.1 582.6L470.6 578.1ZM291.5 366.7L296.0 361.7L300.5 370.2ZM309.3 382.6L313.8 377.5L304.9 374.1ZM331.2 404.4L336.3 400.0L339.7 409.0ZM344.8 420.1L349.9 415.6L341.5 411.0ZM367.3 442.5L371.8 437.5L376.3 446.0ZM385.1 458.4L389.7 453.3L380.7 449.9ZM407.0 480.2L412.1 475.8L415.5 484.8ZM420.6 495.9L425.7 491.4L417.3 486.8ZM443.1 518.3L447.6 513.3L452.1 521.8ZM460.9 534.2L465.5 529.1L456.5 525.7ZM482.8 556.1L487.9 551.6L491.3 560.6ZM496.4 571.7L501.6 567.2L493.1 562.6ZM518.9 594.1L523.4 589.1L527.9 597.6ZM536.7 610.0L541.3 604.9L532.3 601.5ZM307.7 343.0L312.8 338.5L316.1 347.5ZM321.3 358.6L326.4 354.1L317.9 349.6ZM343.8 381.1L348.3 376.0L352.7 384.5ZM361.6 396.9L366.1 391.8L357.1 388.4ZM383.5 418.8L388.6 414.3L391.9 423.3ZM397.1 434.4L402.2 429.9L393.7 425.4ZM419.6 456.9L424.1 451.8L428.5 460.3ZM437.4 472.7L441.9 467.6L432.9 464.2ZM459.3 494.6L464.4 490.1L467.7 499.2ZM472.9 510.2L478.0 505.7L469.5 501.2ZM495.4 532.7L499.9 527.6L504.4 536.1ZM513.2 548.5L517.7 543.4L508.7 540.0ZM535.1 570.4L540.2 565.9L543.5 575.0ZM548.7 586.0L553.8 581.5L545.3 577.0ZM291.6 291.0L296.1 285.9L300.6 294.4ZM309.4 306.8L313.9 301.8L304.9 298.3ZM331.1 328.7L336.2 324.2L339.5 333.3ZM342.1 341.5L347.2 337.1L338.8 332.5ZM364.3 364.0L368.9 358.9L373.3 367.5ZM385.2 382.6L389.8 377.6L380.8 374.1ZM407.1 404.5L412.2 400.0L415.6 409.1ZM420.7 420.1L425.8 415.7L417.3 411.1ZM443.2 442.6L447.7 437.5L452.2 446.0ZM461.0 458.4L465.5 453.4L456.5 449.9ZM482.9 480.3L488.0 475.8L491.4 484.9ZM496.5 495.9L501.6 491.5L493.1 486.9ZM519.0 518.4L523.5 513.3L528.0 521.8ZM536.8 534.2L541.3 529.2L532.3 525.7ZM558.7 556.1L563.8 551.7L567.2 560.7ZM572.3 571.7L577.4 567.3L568.9 562.7ZM594.8 594.2L599.3 589.1L603.8 597.7ZM612.6 610.0L617.1 605.0L608.1 601.5ZM307.9 267.7L313.2 263.5L316.2 272.6ZM322.9 286.6L328.3 282.4L320.0 277.5ZM345.7 309.0L350.0 303.7L354.8 312.0ZM362.0 322.2L366.3 316.9L357.1 313.9ZM384.8 343.8L389.9 339.3L393.3 348.3ZM398.4 359.4L403.5 354.9L395.1 350.4ZM420.9 381.9L425.4 376.8L429.9 385.3ZM438.7 397.7L443.2 392.6L434.3 389.2ZM460.6 419.6L465.7 415.1L469.1 424.1ZM474.2 435.2L479.3 430.7L470.9 426.2ZM496.7 457.7L501.2 452.6L505.7 461.1ZM514.5 473.5L519.1 468.4L510.1 465.0ZM536.4 495.4L541.5 490.9L544.9 499.9ZM550.0 511.0L555.2 506.5L546.7 502.0ZM572.5 533.5L577.0 528.4L581.5 536.9ZM590.3 549.3L594.9 544.2L585.9 540.8ZM612.2 571.2L617.3 566.7L620.7 575.7ZM625.8 586.8L631.0 582.3L622.5 577.8ZM299.5 221.7L304.0 216.6L308.5 225.1ZM317.3 237.5L321.8 232.5L312.9 229.0ZM339.2 259.4L344.3 254.9L347.7 264.0ZM352.8 275.0L357.9 270.6L349.5 266.0ZM375.3 297.5L379.8 292.4L384.3 300.9ZM393.1 313.3L397.6 308.3L388.7 304.8ZM415.0 335.2L420.1 330.8L423.5 339.8ZM428.6 350.8L433.7 346.4L425.3 341.8ZM451.1 373.3L455.6 368.2L460.1 376.8ZM468.9 389.1L473.4 384.1L464.5 380.6ZM490.8 411.0L495.9 406.6L499.3 415.6ZM504.4 426.6L509.5 422.2L501.1 417.6ZM526.9 449.1L531.4 444.0L535.9 452.6ZM544.7 465.0L549.2 459.9L540.3 456.4ZM566.6 486.8L571.7 482.4L575.1 491.4ZM580.2 502.4L585.3 498.0L576.9 493.4ZM602.7 524.9L607.2 519.8L611.7 528.4ZM620.5 540.8L625.0 535.7L616.1 532.2ZM642.4 562.6L647.5 558.2L650.9 567.2ZM656.0 578.2L661.1 573.8L652.7 569.2ZM343.8 229.2L348.3 224.1L352.7 232.6ZM361.6 245.0L366.1 240.0L357.1 236.5ZM383.5 266.9L388.6 262.4L391.9 271.5ZM397.1 282.5L402.2 278.1L393.7 273.5ZM419.6 305.0L424.1 299.9L428.5 308.4ZM437.4 320.8L441.9 315.8L432.9 312.3ZM459.3 342.7L464.4 338.2L467.7 347.3ZM472.9 358.3L478.0 353.9L469.5 349.3ZM495.4 380.8L499.9 375.7L504.4 384.2ZM513.2 396.6L517.7 391.6L508.7 388.1ZM535.1 418.5L540.2 414.0L543.5 423.1ZM548.7 434.1L553.8 429.7L545.3 425.1ZM571.2 456.6L575.7 451.5L580.2 460.0ZM589.0 472.4L593.5 467.4L584.5 463.9ZM610.9 494.3L616.0 489.9L619.3 498.9ZM624.5 509.9L629.6 505.5L621.1 500.9ZM647.0 532.4L651.5 527.3L656.0 535.8ZM664.8 548.2L669.3 543.2L660.3 539.7ZM367.7 215.6L372.2 210.5L376.7 219.0ZM385.6 231.4L390.1 226.3L381.1 222.9ZM407.4 253.3L412.6 248.8L415.9 257.8ZM421.0 268.9L426.2 264.4L417.7 259.9ZM443.5 291.4L448.0 286.3L452.5 294.8ZM461.4 307.2L465.9 302.1L456.9 298.7ZM483.1 329.0L488.2 324.6L491.5 333.6ZM493.8 341.5L498.9 337.0L490.5 332.4ZM516.0 364.0L520.6 358.9L525.0 367.4ZM537.3 383.0L541.8 377.9L532.8 374.4ZM559.0 404.9L564.2 400.4L567.5 409.4ZM572.7 420.5L577.8 416.0L569.3 411.5ZM595.1 443.0L599.7 437.9L604.1 446.4ZM613.0 458.8L617.5 453.7L608.5 450.3ZM634.8 480.7L640.0 476.2L643.3 485.2ZM648.5 496.3L653.6 491.8L645.1 487.3ZM419.7 229.1L424.2 224.0L428.7 232.5ZM437.5 244.9L442.0 239.8L433.1 236.4ZM459.4 266.8L464.5 262.3L467.9 271.3ZM473.0 282.4L478.1 277.9L469.7 273.4ZM495.3 304.9L499.8 299.8L504.2 308.4ZM515.1 322.9L519.7 317.8L510.7 314.3ZM536.9 344.8L542.0 340.3L545.4 349.3ZM548.7 358.2L553.8 353.7L545.3 349.2ZM571.3 380.7L575.8 375.6L580.3 384.1ZM589.1 396.5L593.7 391.4L584.7 388.0ZM611.0 418.4L616.1 413.9L619.5 422.9ZM624.6 434.0L629.7 429.5L621.3 425.0ZM647.1 456.5L651.6 451.4L656.1 459.9ZM664.9 472.3L669.5 467.2L660.5 463.8ZM443.0 213.9L447.5 208.8L452.0 217.3ZM460.8 229.7L465.3 224.6L456.3 221.2ZM482.7 251.6L487.8 247.1L491.1 256.1ZM496.3 267.2L501.4 262.7L492.9 258.2ZM518.8 289.7L523.3 284.6L527.8 293.1ZM536.6 305.5L541.1 300.4L532.1 297.0ZM557.8 327.2L563.0 322.9L566.1 332.0ZM569.7 341.7L575.0 337.4L566.6 332.6ZM592.1 364.2L596.5 359.0L601.1 367.5ZM612.1 381.4L616.5 376.2L607.5 372.9ZM634.3 403.2L639.4 398.7L642.8 407.7ZM647.9 418.8L653.0 414.3L644.5 409.8ZM496.1 229.9L500.6 224.8L505.1 233.3ZM513.9 245.7L518.4 240.7L509.4 237.2ZM535.8 267.6L540.9 263.2L544.3 272.2ZM549.4 283.2L554.5 278.8L546.0 274.2ZM571.9 305.7L576.4 300.6L580.9 309.2ZM589.7 321.5L594.2 316.5L585.2 313.0ZM611.6 343.4L616.7 339.0L620.1 348.0ZM625.2 359.0L630.3 354.6L621.8 350.0ZM647.7 381.5L652.2 376.4L656.7 385.0ZM665.5 397.4L670.0 392.3L661.0 388.8ZM526.3 222.0L530.9 216.9L535.3 225.4ZM544.2 237.8L548.7 232.7L539.7 229.3ZM566.0 259.7L571.2 255.2L574.5 264.2ZM579.7 275.3L584.8 270.8L576.3 266.3ZM602.1 297.8L606.7 292.7L611.1 301.2ZM620.0 313.6L624.5 308.5L615.5 305.1ZM641.8 335.5L647.0 331.0L650.3 340.1ZM655.5 351.1L660.6 346.6L652.1 342.1ZM571.4 229.2L576.0 224.1L580.4 232.6ZM589.3 245.0L593.8 240.0L584.8 236.5ZM611.2 266.9L616.3 262.4L619.6 271.5ZM624.8 282.5L629.9 278.1L621.4 273.5ZM647.3 305.0L651.8 299.9L656.2 308.4ZM665.1 320.8L669.6 315.8L660.6 312.3ZM595.0 214.9L599.5 209.8L604.0 218.3ZM612.8 230.7L617.3 225.6L608.4 222.2ZM634.7 252.6L639.8 248.1L643.2 257.1ZM648.3 268.2L653.4 263.7L645.0 259.2Z" fill="#FFFFCC"/></g><path d="M480.8 289.6 C499.1 255.3 515.3 225.2 565.4 225.2 C588.1 225.2 652 243.2 652 312 C652 398.5 546.3 502.2 480.8 567.5 C415.3 502.2 309.6 398.5 309.6 312 C309.6 243.2 373.5 225.2 396.2 225.2 C446.3 225.2 462.5 255.3 480.8 289.6Z" fill="none" stroke="#231815" stroke-width="0.95"/><path d="M354.8 242 C356 258 357 272 357.2 286.500 M357.200 287.200 L391.600 287.800 C405 292 418 305 425.200 339.800 M422.800 339.800 C440 340 462 339 476 335.500 M482.700 343.400 C486 355 489 366 492 376.200 M492 372.300 C510 370 532 366 542.800 355.600 M550.600 363.700 C553 376 556 388 559.200 399 M556 399.700 C568 398 580 394 586.600 388 M595.200 389.500 C599 400 603 412 606 424" fill="none" stroke="#000" stroke-width="2.300" stroke-dasharray="6.2 3.8"/><g shape-rendering="crispEdges" fill="none"><path d="M349 233.5h7M349.5 233v5M355.5 233v5M347 236.5h2M356 236.5h2M352.5 231v2" stroke="#0000FF"/><path d="M349 238.5h7M352.5 239v3" stroke="#22CC00"/></g><text x="364.2" y="238.600" font-size="8.400" fill="#1FCF00" stroke="#1FCF00" stroke-width="0.35" font-family="'Liberation Sans','WenQuanYi Zen Hei','Noto Sans CJK SC',sans-serif">边缘</text></svg>
<div class="a" style="left:960px;top:131px;width:16px;height:544px;background-image:conic-gradient(#fff 25%,#D4D0C8 0 50%,#fff 0 75%,#D4D0C8 0);background-size:2px 2px;"></div><div class="a" style="left:960px;top:131px;width:16px;height:16px;box-sizing:border-box;background:#D4D0C8;border:1px solid;border-color:#fff #808080 #808080 #fff"></div><svg style="left:964.5px;top:137px" width="7" height="4" viewBox="0 0 7 4" ><path d="M0 4h7l-3.5-4z" fill="#000"/></svg><div class="a" style="left:960px;top:659px;width:16px;height:16px;box-sizing:border-box;background:#D4D0C8;border:1px solid;border-color:#fff #808080 #808080 #fff"></div><svg style="left:964.5px;top:665px" width="7" height="4" viewBox="0 0 7 4" ><path d="M0 0h7l-3.5 4z" fill="#000"/></svg><div class="a" style="left:960px;top:325px;width:16px;height:137px;box-sizing:border-box;background:#D4D0C8;border:1px solid;border-color:#D4D0C8 #404040 #404040 #D4D0C8;box-shadow:inset 1px 1px 0 #fff, inset -1px -1px 0 #808080"></div><div class="a" style="left:514px;top:675px;width:446px;height:16px;background-image:conic-gradient(#fff 25%,#D4D0C8 0 50%,#fff 0 75%,#D4D0C8 0);background-size:2px 2px;"></div><div class="a" style="left:514px;top:675px;width:17px;height:16px;box-sizing:border-box;background:#D4D0C8;border:1px solid;border-color:#fff #808080 #808080 #fff"></div><svg style="left:520px;top:679.5px" width="4" height="7" viewBox="0 0 4 7" ><path d="M4 0v7l-4-3.5z" fill="#000"/></svg><div class="a" style="left:944px;top:675px;width:16px;height:16px;box-sizing:border-box;background:#D4D0C8;border:1px solid;border-color:#fff #808080 #808080 #fff"></div><svg style="left:950.5px;top:679.5px" width="4" height="7" viewBox="0 0 4 7" ><path d="M0 0v7l4-3.5z" fill="#000"/></svg><div class="a" style="left:672px;top:675px;width:130px;height:16px;box-sizing:border-box;background:#D4D0C8;border:1px solid;border-color:#D4D0C8 #404040 #404040 #D4D0C8;box-shadow:inset 1px 1px 0 #fff, inset -1px -1px 0 #808080"></div><svg style="left:507px;top:677px" width="7" height="13" shape-rendering="crispEdges"><path d="M0.5 0v13M3.5 0v13" stroke="#808080"/><path d="M1.5 0v13M4.5 0v13" stroke="#fff"/></svg><svg style="left:961px;top:676px" width="14" height="14" viewBox="0 0 14 14" ><circle cx="5.5" cy="5.5" r="4.5" fill="#ECECF4" stroke="#55557C" stroke-width="1.1"/><circle cx="5.5" cy="5.5" r="1.8" fill="none" stroke="#55557C" stroke-width="0.9"/><path d="M5.5 2v7M2 5.5h7" stroke="#55557C" stroke-width="0.7"/><path d="M9 9l3.5 3.5" stroke="#55557C" stroke-width="1.8"/></svg>
<div class="a" style="left:977px;top:110px;width:1px;height:582px;background:#B4B0A8"></div><div class="a" style="left:978px;top:110px;width:1px;height:582px;background:#fff"></div><svg style="left:984px;top:116px" width="10" height="7" viewBox="0 0 10 7" ><path d="M4 0.3L1 3.5L4 6.7M8.5 0.3L5.5 3.5L8.5 6.7" fill="none" stroke="#5A5A5A" stroke-width="1.2"/></svg><svg style="left:0;top:0" width="1024" height="768"><defs><linearGradient id="tabg" x1="0" y1="0" x2="1" y2="0"><stop offset="0" stop-color="#D8D4CC"/><stop offset="0.6" stop-color="#fff"/><stop offset="1" stop-color="#F4F2EE"/></linearGradient></defs><path d="M980.5 133v560" stroke="#9C9890" fill="none"/><path d="M981 136.5h16l3 3v73l-3 3" stroke="#9C9890" fill="none"/><path d="M981 219.5l2-1.5h14l3 3v45l-3 3h-14l-2-2" stroke="#9C9890" fill="none"/><path d="M981 270l2 2.5h14l3.5 3.5v84l-3.5 4h-14l-2 2z" fill="url(#tabg)" stroke="none"/><path d="M981 270l2 2.5h14l3.5 3.5v84l-3.5 4h-14l-2 2" stroke="#B0ACA4" fill="none"/></svg><svg style="left:982px;top:141px" width="17" height="16" viewBox="0 0 17 16" ><path d="M2 4v12M7 9v7" stroke="#333" stroke-width="1" stroke-dasharray="1 1"/><path d="M2 3.5h5M8 9.500h4M8 14.500h5" stroke="#333" stroke-width="1" stroke-dasharray="1 1"/><circle cx="2" cy="3" r="1.5" fill="#fff" stroke="#44446C"/><rect x="6.5" y="0.5" width="5" height="5" fill="#C4C4E0" stroke="#44446C"/><rect x="12.500" y="7" width="4" height="4.500" fill="#C4C4E0" stroke="#44446C"/><rect x="13.5" y="3.5" width="2" height="2" fill="#fff" stroke="#44446C"/><circle cx="14.500" cy="14.5" r="1.5" fill="#fff" stroke="#44446C"/></svg><div class="t" style="left:994.8px;top:161px;font-size:10.3px;color:#404040;font-weight:400;letter-spacing:0.7px;font-family:'Liberation Sans','Noto Sans CJK SC',sans-serif;transform-origin:0 0;transform:rotate(90deg) ;">对象管理器</div><svg style="left:982px;top:223px" width="17" height="16" viewBox="0 0 17 16" ><path d="M0.7 2v10.500l2.600-2.400l2.200 4.500l1.700-0.800l-2.100-4.400h3.500z" fill="#fff" stroke="#6C6C9C" stroke-width="1.100"/></svg><div class="t" style="left:991px;top:221px;font-size:12px;color:#55557C;font-weight:bold">?</div><div class="t" style="left:994.8px;top:245px;font-size:10.3px;color:#404040;font-weight:400;letter-spacing:0.7px;font-family:'Liberation Sans','Noto Sans CJK SC',sans-serif;transform-origin:0 0;transform:rotate(90deg) ;">提示</div><svg style="left:984px;top:274px" width="17" height="16" viewBox="0 0 17 16" ><rect x="6" y="3" width="10" height="12" fill="#8C8CB4"/><path d="M8 6l2-1l1 2l2-1M8 10l3 2l2-3l2 2" stroke="#E8E8F8" stroke-width="1" fill="none"/><path d="M1 6l4-4l4 4l-4 4z" fill="#fff" stroke="#7C7CA0" stroke-width="0.8"/><path d="M2 6.500h6l-3 3z" fill="#F0A020"/></svg><div class="t" style="left:997.5px;top:294.5px;font-size:10.3px;color:#000;font-weight:700;letter-spacing:0.7px;font-family:'Liberation Sans','Noto Sans CJK SC',sans-serif;transform-origin:0 0;transform:rotate(90deg) ;">对象属性</div><div class="a" style="left:984px;top:344px;width:16px;height:15px;box-sizing:border-box;border:1px solid #808080;background:#E8E6E0"></div><svg style="left:987px;top:347px" width="10" height="9" viewBox="0 0 10 9" ><path d="M1.500 1l7 7M8.500 1l-7 7" stroke="#000" stroke-width="2.300"/></svg>
<div class="a" style="left:1003px;top:110px;width:1px;height:582px;background:#fff"></div><div class="a" style="left:1002px;top:110px;width:1px;height:582px;background:#B0ACA4"></div><div class="a" style="left:1008px;top:112px;width:12px;height:1px;background:#fff"></div><div class="a" style="left:1008px;top:113px;width:12px;height:1px;background:#808080"></div><div class="a" style="left:1008px;top:115px;width:12px;height:1px;background:#fff"></div><div class="a" style="left:1008px;top:116px;width:12px;height:1px;background:#808080"></div><svg style="left:1007px;top:120px" width="14" height="14" viewBox="0 0 14 14" ><defs><radialGradient id="pb" cx="0.4" cy="0.35" r="0.7"><stop offset="0" stop-color="#fff"/><stop offset="0.7" stop-color="#ECEAE6"/><stop offset="1" stop-color="#B8B4AC"/></radialGradient></defs><circle cx="7" cy="7" r="6.4" fill="url(#pb)" stroke="#A8A49C" stroke-width="0.8"/><path d="M5 3.500v7l5-3.500z" fill="#000"/></svg><svg style="left:1007px;top:138px" width="14" height="12" viewBox="0 0 14 12" ><path d="M1.500 11.500l6.500-7" stroke="#C0BCB4" stroke-width="2"/><path d="M7.300 3.300l3 3" stroke="#B8B4AC" stroke-width="2.200"/><path d="M9.500 4l2.500-2.800" stroke="#B8B4AC" stroke-width="3.400" stroke-linecap="round"/></svg><svg style="left:1010px;top:159px" width="8" height="4" viewBox="0 0 8 4" ><path d="M0 4h8l-4-4z" fill="#8C8880"/></svg><div class="a" style="left:1010px;top:163px;width:8px;height:1px;background:#fff"></div><div class="a" style="left:1004px;top:169px;width:20px;height:19px;background:#fff"></div><div class="a" style="left:1005px;top:170px;width:18px;height:17px;box-sizing:border-box;background:#fff;border:1px solid #000;box-shadow:inset 0 0 0 1px rgba(0,0,0,0.45)"></div><svg style="left:1007px;top:172px" width="14" height="13" viewBox="0 0 14 13" ><path d="M0 0l14 13M14 0l-14 13" stroke="#000" stroke-width="0.9"/></svg><div class="a" style="left:1006px;top:186px;width:16.5px;height:18px;background:#231815;box-shadow:inset -1px -1px 0 rgba(0,0,0,0.3)"></div><div class="a" style="left:1006px;top:204px;width:16.5px;height:17px;background:#3E3A39;box-shadow:inset -1px -1px 0 rgba(0,0,0,0.3)"></div><div class="a" style="left:1006px;top:221px;width:16.5px;height:17px;background:#595757;box-shadow:inset -1px -1px 0 rgba(0,0,0,0.3)"></div><div class="a" style="left:1006px;top:238px;width:16.5px;height:17px;background:#727171;box-shadow:inset -1px -1px 0 rgba(0,0,0,0.3)"></div><div class="a" style="left:1006px;top:255px;width:16.5px;height:17px;background:#898989;box-shadow:inset -1px -1px 0 rgba(0,0,0,0.3)"></div><div class="a" style="left:1006px;top:272px;width:16.5px;height:17px;background:#9FA0A0;box-shadow:inset -1px -1px 0 rgba(0,0,0,0.3)"></div><div class="a" style="left:1006px;top:289px;width:16.5px;height:17px;background:#B5B5B6;box-shadow:inset -1px -1px 0 rgba(0,0,0,0.3)"></div><div class="a" style="left:1006px;top:306px;width:16.5px;height:17px;background:#C9CACA;box-shadow:inset -1px -1px 0 rgba(0,0,0,0.3)"></div><div class="a" style="left:1006px;top:323px;width:16.5px;height:17px;background:#DCDDDD;box-shadow:inset -1px -1px 0 rgba(0,0,0,0.3)"></div><div class="a" style="left:1006px;top:340px;width:16.5px;height:17px;background:#EFEFEF;box-shadow:inset -1px -1px 0 rgba(0,0,0,0.3)"></div><div class="a" style="left:1006px;top:357px;width:16.5px;height:17px;background:#FFFFFF;box-shadow:inset -1px -1px 0 rgba(0,0,0,0.3)"></div><div class="a" style="left:1006px;top:374px;width:16.5px;height:17px;background:#1D2088;box-shadow:inset -1px -1px 0 rgba(0,0,0,0.3)"></div><div class="a" style="left:1006px;top:391px;width:16.5px;height:17px;background:#00A0E9;box-shadow:inset -1px -1px 0 rgba(0,0,0,0.3)"></div><div class="a" style="left:1006px;top:408px;width:16.5px;height:17px;background:#009944;box-shadow:inset -1px -1px 0 rgba(0,0,0,0.3)"></div><div class="a" style="left:1006px;top:425px;width:16.5px;height:17px;background:#FFF100;box-shadow:inset -1px -1px 0 rgba(0,0,0,0.3)"></div><div class="a" style="left:1006px;top:442px;width:16.5px;height:17px;background:#E60012;box-shadow:inset -1px -1px 0 rgba(0,0,0,0.3)"></div><div class="a" style="left:1006px;top:459px;width:16.5px;height:17px;background:#E4007F;box-shadow:inset -1px -1px 0 rgba(0,0,0,0.3)"></div><div class="a" style="left:1006px;top:476px;width:16.5px;height:17px;background:#A8408C;box-shadow:inset -1px -1px 0 rgba(0,0,0,0.3)"></div><div class="a" style="left:1006px;top:493px;width:16.5px;height:17px;background:#F08300;box-shadow:inset -1px -1px 0 rgba(0,0,0,0.3)"></div><div class="a" style="left:1006px;top:510px;width:16.5px;height:17px;background:#F5B2B2;box-shadow:inset -1px -1px 0 rgba(0,0,0,0.3)"></div><div class="a" style="left:1006px;top:527px;width:16.5px;height:17px;background:#897870;box-shadow:inset -1px -1px 0 rgba(0,0,0,0.3)"></div><div class="a" style="left:1006px;top:544px;width:16.5px;height:17px;background:#D2CCE6;box-shadow:inset -1px -1px 0 rgba(0,0,0,0.3)"></div><div class="a" style="left:1006px;top:561px;width:16.5px;height:17px;background:#A59ACA;box-shadow:inset -1px -1px 0 rgba(0,0,0,0.3)"></div><div class="a" style="left:1006px;top:578px;width:16.5px;height:17px;background:#6C8CC8;box-shadow:inset -1px -1px 0 rgba(0,0,0,0.3)"></div><div class="a" style="left:1006px;top:595px;width:16.5px;height:17px;background:#7A6AB4;box-shadow:inset -1px -1px 0 rgba(0,0,0,0.3)"></div><div class="a" style="left:1006px;top:612px;width:16.5px;height:18px;background:#8F82BC;box-shadow:inset -1px -1px 0 rgba(0,0,0,0.3)"></div><div class="a" style="left:1006px;top:630px;width:16.5px;height:17px;background:#4D6295;box-shadow:inset -1px -1px 0 rgba(0,0,0,0.3)"></div><svg style="left:1010px;top:653px" width="8" height="4" viewBox="0 0 8 4" ><path d="M0 0h8l-4 4z" fill="#000"/></svg><svg style="left:1011px;top:668.5px" width="7" height="8" viewBox="0 0 7 8" ><path d="M0.700 0v8" stroke="#000" stroke-width="1.400"/><path d="M6.500 0v8l-4.500-4z" fill="#000"/></svg><div class="a" style="left:1004px;top:685px;width:19px;height:1px;background:#fff"></div>
<div class="a" style="left:51px;top:675px;width:463px;height:1px;background:#808080"></div><svg style="left:54px;top:677px" width="10" height="13" shape-rendering="crispEdges"><path d="M0.5 0.5h5l3 3v8h-8z" fill="#fff" stroke="#000" stroke-width="1"/><path d="M5.5 0.5v3h3" fill="none" stroke="#000" stroke-width="1"/><path d="M2 7.5h5M4.5 5v5" stroke="#000" stroke-width="1"/></svg><svg style="left:70px;top:679px" width="9" height="9" viewBox="0 0 9 9" ><path d="M1 0v9" stroke="#7C7C7C" stroke-width="1.400"/><path d="M8 0v9l-5-4.500z" fill="#7C7C7C"/></svg><svg style="left:89px;top:679px" width="6" height="9" viewBox="0 0 6 9" ><path d="M6 0v9l-5.500-4.500z" fill="#7C7C7C"/></svg><div class="t" style="left:120px;top:677px;font-size:13.2px;letter-spacing:0.2px;color:#1C1C3C">1 / 1</div><svg style="left:175px;top:679px" width="6" height="9" viewBox="0 0 6 9" ><path d="M0 0v9l5.500-4.500z" fill="#7C7C7C"/></svg><svg style="left:188px;top:679px" width="9" height="9" viewBox="0 0 9 9" ><path d="M8 0v9" stroke="#7C7C7C" stroke-width="1.400"/><path d="M1 0v9l5-4.500z" fill="#7C7C7C"/></svg><svg style="left:204px;top:677px" width="10" height="13" shape-rendering="crispEdges"><path d="M0.5 0.5h5l3 3v8h-8z" fill="#fff" stroke="#000" stroke-width="1"/><path d="M5.5 0.5v3h3" fill="none" stroke="#000" stroke-width="1"/><path d="M2 7.5h5M4.5 5v5" stroke="#000" stroke-width="1"/></svg><svg style="left:217px;top:675px" width="56" height="17"><path d="M0.500 1v15.500h54v-5l-9-10.500z" fill="#fff" stroke="#808080" stroke-width="1"/><path d="M0 0.500h46" stroke="#808080" stroke-width="1"/></svg><div class="t" style="left:233px;top:677px;font-size:12px;font-family:'Liberation Sans','Noto Sans CJK SC',sans-serif">页 1</div>
<div class="hl" style="top:692px;height:2px;background:#fff"></div><div class="hl" style="top:691px;background:#D4D0C8"></div><div class="t" style="left:5px;top:698.6px;font-size:11px;letter-spacing:0.12px">( 113.280, 150.476 )</div><svg style="left:120px;top:699px" width="5" height="9" viewBox="0 0 5 9" ><path d="M0 0v9l5-4.500z" fill="#000"/></svg><div class="t" style="left:394px;top:698px;font-size:12px">完美形状 于 图层 <span style="font-size:11px">1</span></div><div class="t" style="left:5px;top:719px;font-size:11px;letter-spacing:-0.19px"><span style="font-size:12px;letter-spacing:0">文档颜色预置文件</span>: RGB: sRGB IEC61966-2.1; CMYK: Japan Color 2001 Coated; <span style="font-size:12px">灰度</span>: Dot Gain 15%</div><svg style="left:504px;top:720px" width="5" height="9" viewBox="0 0 5 9" ><path d="M0 0v9l5-4.500z" fill="#000"/></svg><svg style="left:771px;top:698px" width="16" height="15" viewBox="0 0 16 15" ><rect x="0.500" y="0.500" width="15" height="11" fill="#C8C8E4" stroke="#6C6CA0"/><rect x="1.500" y="1.500" width="13" height="2" fill="#E8E8F8"/><circle cx="8" cy="6.500" r="3.200" fill="#fff" stroke="#444" stroke-width="1.200"/><circle cx="8" cy="6.500" r="1" fill="#444"/><rect x="12" y="3" width="2" height="1.500" fill="#E04020"/><path d="M4 14h8" stroke="#6C6CA0" stroke-width="1.200"/></svg><div class="a" style="left:811px;top:698px;width:1px;height:13px;background:#808080"></div><div class="a" style="left:812px;top:698px;width:1px;height:13px;background:#fff"></div><svg style="left:815px;top:698px" width="16" height="15" viewBox="0 0 16 15" ><path d="M0.800 8l6.500-6.500l6.500 6.500l-6.500 6.500z" fill="#fff" stroke="#3C3C5C" stroke-width="1.100"/><path d="M2 8.500h10.600l-5.300 5.300z" fill="#F08000"/><path d="M7.500 1.500l-1.500-1.500" stroke="#333" stroke-width="1"/><circle cx="8.500" cy="6.500" r="1" fill="#333"/><path d="M12 6.500c2 0.500 2.800 2 2.600 5.500" fill="none" stroke="#F08000" stroke-width="1.600"/></svg><svg style="left:836px;top:697px" width="18" height="17" viewBox="0 0 18 17" ><rect x="0.500" y="0.500" width="17" height="16" fill="#FFFFCC" stroke="#6C5C4C"/><ellipse cx="3" cy="3" rx="2.300" ry="1.300" transform="rotate(60 3 3)" fill="#CC3300"/><ellipse cx="8" cy="2" rx="2.300" ry="1.300" transform="rotate(60 8 2)" fill="#CC3300"/><ellipse cx="13" cy="4" rx="2.300" ry="1.300" transform="rotate(60 13 4)" fill="#CC3300"/><ellipse cx="5" cy="7" rx="2.300" ry="1.300" transform="rotate(60 5 7)" fill="#CC3300"/><ellipse cx="10" cy="8" rx="2.300" ry="1.300" transform="rotate(60 10 8)" fill="#CC3300"/><ellipse cx="3" cy="12" rx="2.300" ry="1.300" transform="rotate(60 3 12)" fill="#CC3300"/><ellipse cx="8" cy="13" rx="2.300" ry="1.300" transform="rotate(60 8 13)" fill="#CC3300"/><ellipse cx="13" cy="12" rx="2.300" ry="1.300" transform="rotate(60 13 12)" fill="#CC3300"/><ellipse cx="14" cy="8" rx="2.300" ry="1.300" transform="rotate(60 14 8)" fill="#CC3300"/><ellipse cx="1" cy="8" rx="2.300" ry="1.300" transform="rotate(60 1 8)" fill="#CC3300"/></svg><div class="t" style="left:857px;top:698px;font-size:12px">全色图</div><svg style="left:819px;top:719px" width="9" height="15" viewBox="0 0 9 15" ><path d="M4.500 0.500C7 3.500 8.300 7 7 11h-5C0.700 7 2 3.500 4.500 0.500z" fill="#F4F4FA" stroke="#44446C" stroke-width="1"/><path d="M4.500 2.500v5.500" stroke="#44446C" stroke-width="0.800"/><circle cx="4.500" cy="8.300" r="0.900" fill="#44446C"/><rect x="0.500" y="12" width="8" height="2.200" fill="#26263C"/></svg><div class="a" style="left:836px;top:717px;width:18px;height:18px;box-sizing:border-box;background:#231815;border:1px solid #808080"></div><div class="t" style="left:857px;top:720px;font-size:11px;letter-spacing:-0.12px">C: 0 M: 0 Y: 0 K: 100&nbsp; .200 mm</div><div class="hl" style="top:737px;background:#9C9A94"></div><div class="hl" style="top:739px;background:#fff"></div>
<div class="btn" style="left:2px;top:742px;width:47px;height:21px"></div><svg style="left:5px;top:745px" width="15" height="14" viewBox="0 0 15 14" ><path d="M1 3c2-1.500 3.500-1 5.500 0l-1 4.500c-2-1-3.500-1.500-5.500 0z" fill="#E8452C"/><path d="M7.500 3.300c2 1 3.500 1.300 5.500 0l-1 4.500c-2 1.300-3.500 1-5.500 0z" fill="#6CB82C"/><path d="M0 8.500c2-1.500 3.500-1 5.500 0l-1 4.500c-2-1-3.500-1.500-5.500 0z" fill="#3C6CD8"/><path d="M6.300 8.800c2 1 3.500 1.300 5.500 0l-1 4.500c-2 1.300-3.500 1-5.500 0z" fill="#F4C020"/></svg><div class="t" style="left:21px;top:746px;font-size:12px;font-weight:bold;font-family:'Liberation Sans','Noto Sans CJK SC',sans-serif">开始</div><svg style="left:56.5px;top:745.5px" width="15" height="15" viewBox="0 0 15 15" ><path d="M7.5 7.500V0.300A7.200 7.200 0 0 0 0.300 7.500z" fill="#E85424"/><path d="M7.500 7.500H14.700A7.200 7.200 0 0 0 7.500 0.300z" fill="#6CB030"/><path d="M7.500 7.500V14.700A7.200 7.200 0 0 0 14.700 7.500z" fill="#E8C434"/><path d="M7.500 7.500H0.300A7.200 7.200 0 0 0 7.500 14.700z" fill="#2C6CD4"/><circle cx="7.500" cy="7.500" r="7.200" fill="none" stroke="rgba(60,60,60,0.350)" stroke-width="0.600"/><circle cx="7.500" cy="7.500" r="4.300" fill="#F4F4F4"/><path d="M5.800 4.800v5.400l4.700-2.700z" fill="#222"/></svg><svg style="left:80px;top:745px" width="16" height="16" viewBox="0 0 16 16" ><rect x="1" y="1.500" width="13" height="13" rx="3" fill="#3C7CE0"/><rect x="3" y="3.500" width="9" height="9" rx="1.500" fill="#fff"/><path d="M10 6.500a2.800 2.800 0 1 0 0 3.500M6 8h4.500" stroke="#2C5CC8" stroke-width="1.500" fill="none"/><path d="M11 2l3.500-1.500l-1 3.500" fill="#F0C020"/></svg><svg style="left:103px;top:746px" width="16" height="16" viewBox="0 0 16 16" ><rect x="0" y="0" width="16" height="15.500" fill="#E6E6E6"/><path d="M8 3.500v10" stroke="#D01040" stroke-width="1.700"/><path d="M8 6C5.500 4 2.500 4.300 1.500 5.800C3.500 7.500 6 7.300 8 6zM8 6C10.500 4 13.500 4.300 14.500 5.800C12.500 7.500 10 7.300 8 6z" fill="#D81848"/><rect x="6.800" y="2.500" width="2.400" height="1.800" fill="#70306C"/></svg><svg style="left:131px;top:746px" width="7" height="6" viewBox="0 0 7 6" ><path d="M0.500 0.500l2.500 2.500l-2.500 2.500M4 0.500l2.500 2.500l-2.500 2.500" fill="none" stroke="#000" stroke-width="1.100"/></svg><div class="a" style="left:143px;top:742px;width:160px;height:21px;box-sizing:border-box;border:1px solid;border-color:#404040 #fff #fff #404040;box-shadow:inset 1px 1px 0 #808080;background-image:conic-gradient(#fff 25%%,#D4D0C8 0 50%%,#fff 0 75%%,#D4D0C8 0);background-size:2px 2px"></div><svg style="left:148px;top:745px" width="15" height="15" viewBox="0 0 15 15" ><rect width="15" height="15" fill="#8BB92D"/><path d="M1.500 1.200L9 1.200L12 6.500L12.500 11.200L7.200 10L2.500 6Z" fill="#fff"/><path d="M4 1.500L10.700 10M7 1.500L12 8" stroke="#8BB92D" stroke-width="0.900"/><path d="M10.800 9.800L13.600 13.600L9.800 11.700Z" fill="#3A3A3A"/></svg><div class="t" style="left:167px;top:747px;font-size:11.670px;font-family:'Liberation Mono','Noto Sans CJK SC',monospace;letter-spacing:-1px">CorelDRAW X5 - [<span style="font-size:12px">未</span>...</div><svg style="left:958px;top:747px" width="17" height="14" viewBox="0 0 17 14" ><rect x="0.500" y="3.500" width="16" height="10" rx="1.500" fill="#fff" stroke="#222" stroke-width="1"/><path d="M3 6.500h11M3 8.500h11" stroke="#222" stroke-width="1" stroke-dasharray="1 1"/><path d="M4 11h9" stroke="#222" stroke-width="1"/><path d="M3 3.500v-2.500M5 3.500v-2M7 3.500v-2.500M9 3.500v-2" stroke="#222" stroke-width="0.800"/></svg><div class="a" style="left:979px;top:742px;width:1px;height:22px;background:#808080"></div><div class="a" style="left:980px;top:742px;width:1px;height:22px;background:#fff"></div><div class="a" style="left:984px;top:742px;width:40px;height:22px;box-sizing:border-box;border:1px solid;border-color:#808080 #fff #fff #808080"></div><svg style="left:990px;top:752px" width="8" height="6" viewBox="0 0 8 6" ><path d="M3.500 0.500l-2.500 2.500l2.500 2.500M7 0.500l-2.500 2.500l2.500 2.500" fill="none" stroke="#000" stroke-width="1.300"/></svg><svg style="left:1003px;top:746px" width="15" height="15" viewBox="0 0 15 15" ><rect x="1" y="3" width="7" height="6" fill="#4C6CD0" stroke="#223" stroke-width="0.800"/><rect x="2.500" y="10" width="5" height="3" fill="#8C9CD8" stroke="#223" stroke-width="0.800"/><path d="M10 1.500c1.500 1.500 1.500 4 0 5.500M12 0.500c2.500 2.500 2.500 5.500 0 8" fill="none" stroke="#555" stroke-width="0.900"/></svg>
</body></html>
